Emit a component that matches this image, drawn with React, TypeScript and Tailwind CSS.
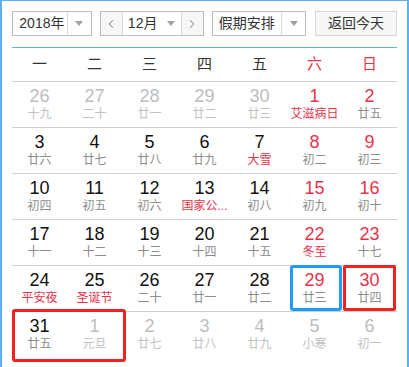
import { ChevronLeft, ChevronRight } from 'lucide-react';

type Day = {
  n: number;
  lunar: string;
  other?: boolean;
  red?: boolean;
  fest?: boolean;
};

const weeks: Day[][] = [
  [
    { n: 26, lunar: '十九', other: true },
    { n: 27, lunar: '二十', other: true },
    { n: 28, lunar: '廿一', other: true },
    { n: 29, lunar: '廿二', other: true },
    { n: 30, lunar: '廿三', other: true },
    { n: 1, lunar: '艾滋病日', red: true, fest: true },
    { n: 2, lunar: '廿五', red: true },
  ],
  [
    { n: 3, lunar: '廿六' },
    { n: 4, lunar: '廿七' },
    { n: 5, lunar: '廿八' },
    { n: 6, lunar: '廿九' },
    { n: 7, lunar: '大雪', fest: true },
    { n: 8, lunar: '初二', red: true },
    { n: 9, lunar: '初三', red: true },
  ],
  [
    { n: 10, lunar: '初四' },
    { n: 11, lunar: '初五' },
    { n: 12, lunar: '初六' },
    { n: 13, lunar: '国家公...', fest: true },
    { n: 14, lunar: '初八' },
    { n: 15, lunar: '初九', red: true },
    { n: 16, lunar: '初十', red: true },
  ],
  [
    { n: 17, lunar: '十一' },
    { n: 18, lunar: '十二' },
    { n: 19, lunar: '十三' },
    { n: 20, lunar: '十四' },
    { n: 21, lunar: '十五' },
    { n: 22, lunar: '冬至', red: true, fest: true },
    { n: 23, lunar: '十七', red: true },
  ],
  [
    { n: 24, lunar: '平安夜', fest: true },
    { n: 25, lunar: '圣诞节', fest: true },
    { n: 26, lunar: '二十' },
    { n: 27, lunar: '廿一' },
    { n: 28, lunar: '廿二' },
    { n: 29, lunar: '廿三', red: true },
    { n: 30, lunar: '廿四', red: true },
  ],
  [
    { n: 31, lunar: '廿五' },
    { n: 1, lunar: '元旦', other: true },
    { n: 2, lunar: '廿七', other: true },
    { n: 3, lunar: '廿八', other: true },
    { n: 4, lunar: '廿九', other: true },
    { n: 5, lunar: '小寒', other: true },
    { n: 6, lunar: '初一', other: true },
  ],
];

const weekdays = ['一', '二', '三', '四', '五', '六', '日'];

function Caret() {
  return <span className="w-0 h-0 border-x-[4px] border-x-transparent border-t-[5px] border-t-[#a0a0a0]" />;
}

function DayCell({ day }: { day: Day }) {
  const numColor = day.other ? 'text-[#bdbdbd]' : day.red ? 'text-[#e8334a]' : 'text-[#111]';
  const lunarColor = day.other ? 'text-[#c2c2c2]' : day.fest ? 'text-[#e8334a]' : 'text-[#8c8c8c]';

  return (
    <div className="h-[46px] border-t border-[#d0d0d0] flex flex-col items-center pt-[5px]">
      <span className={`text-[18px] leading-[18px] ${numColor}`}>{day.n}</span>
      <span className={`text-[12px] leading-[16px] mt-[1px] whitespace-nowrap ${lunarColor}`}>{day.lunar}</span>
    </div>
  );
}

export default function App() {
  return (
    <div
      className="w-[409px] h-[367px] overflow-hidden bg-white"
      style={{ fontFamily: '"Liberation Sans", "Noto Sans CJK SC", sans-serif' }}
    >
      <div className="h-[400px] border-x-2 border-t border-[#62aef5] px-[10px] pt-[10px]">
        {/* toolbar */}
        <div className="flex items-center h-[25px] text-[14px] text-[#333]">
          <div className="flex h-full w-[80px] border border-[#bdbdbd] bg-white">
            <div className="flex-1 flex items-center justify-center pl-[4px]">2018年</div>
            <div className="w-[24px] border-l border-[#dcdcdc] flex items-center justify-center">
              <Caret />
            </div>
          </div>

          <div className="flex h-full w-[104px] ml-[8px] border border-[#bdbdbd] bg-white">
            <div className="w-[22px] bg-[#f6f6f6] border-r border-[#dcdcdc] flex items-center justify-center text-[#666]">
              <ChevronLeft size={14} strokeWidth={1.5} />
            </div>
            <div className="flex-1 flex items-center justify-center gap-[10px]">
              <span>12月</span>
              <Caret />
            </div>
            <div className="w-[22px] bg-[#f6f6f6] border-l border-[#dcdcdc] flex items-center justify-center text-[#666]">
              <ChevronRight size={14} strokeWidth={1.5} />
            </div>
          </div>

          <div className="flex h-full w-[95px] ml-[8px] border border-[#bdbdbd] bg-white">
            <div className="flex-1 flex items-center justify-center">假期安排</div>
            <div className="w-[24px] border-l border-[#dcdcdc] flex items-center justify-center">
              <Caret />
            </div>
          </div>

          <div className="flex h-full w-[82px] ml-[9px] border border-[#d6d6d6] bg-[#f7f7f7] items-center justify-center">
            返回今天
          </div>
        </div>

        <div className="mt-[11px] border-t border-[#62aef5]" />

        {/* weekdays */}
        <div className="grid grid-cols-7 h-[33px] items-center text-[15px]">
          {weekdays.map((w, i) => (
            <div key={w} className={`text-center ${i >= 5 ? 'text-[#e8334a]' : 'text-[#333]'}`}>
              {w}
            </div>
          ))}
        </div>

        {/* days */}
        <div className="relative grid grid-cols-7">
          {weeks.flat().map((d, i) => (
            <DayCell key={i} day={d} />
          ))}
          <div className="absolute left-[278px] top-[184px] w-[52px] h-[46px] border-[3px] border-[#1f9cf7] rounded-[3px]" />
          <div className="absolute left-[331px] top-[184px] w-[53px] h-[46px] border-[3px] border-[#f41f1f] rounded-[2px]" />
          <div className="absolute left-0 top-[228px] w-[114px] h-[53px] border-[3px] border-[#f41f1f] rounded-[3px]" />
        </div>
      </div>
    </div>
  );
}
